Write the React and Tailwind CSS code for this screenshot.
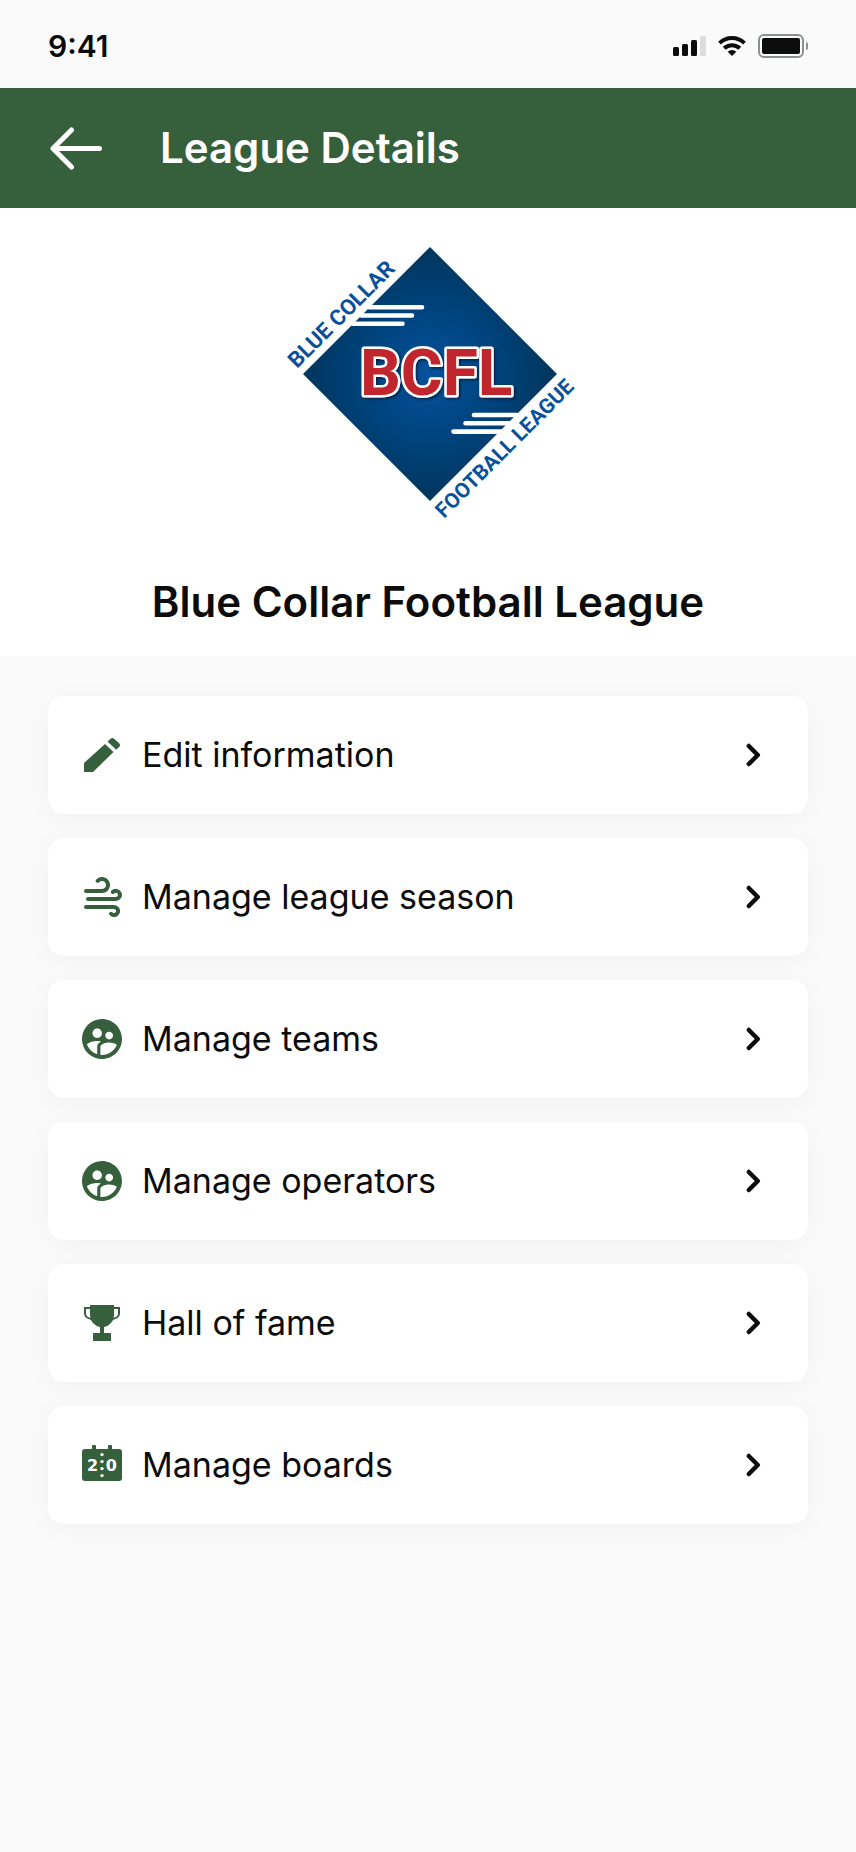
import React from "react"
import { MdSupervisedUserCircle } from "react-icons/md"

function StatusBar() {
  return (
    <div className="flex h-[88px] items-center justify-between px-12 pt-1 text-[#0b0c0b]">
      <span className="text-[30px] font-semibold leading-8">9:41</span>
      <div className="flex items-center gap-3">
        <svg width="33" height="20" viewBox="0 0 33 20" fill="currentColor">
          <rect x="0" y="11" width="6" height="9" rx="1.5" />
          <rect x="9" y="8" width="6" height="12" rx="1.5" />
          <rect x="18" y="4" width="6" height="16" rx="1.5" />
          <rect x="27" y="0" width="6" height="20" rx="1.5" fill="#dcdddd" />
        </svg>
        <svg width="28" height="20" viewBox="0 0 28 20" fill="none" stroke="currentColor" strokeWidth="4">
          <path d="M1.5 7.2a17.8 17.8 0 0 1 25 0" />
          <path d="M6.2 12.3a11.2 11.2 0 0 1 15.6 0" />
          <path d="M14 20l-4.3-4.3a6.2 6.2 0 0 1 8.6 0z" fill="currentColor" stroke="none" />
        </svg>
        <svg width="50" height="24" viewBox="0 0 50 24">
          <rect x="1" y="1" width="44" height="22" rx="5" fill="none" stroke="#8b918d" strokeWidth="2" />
          <rect x="4" y="4" width="38" height="16" rx="2" fill="currentColor" />
          <path d="M48 8a2 2 0 0 1 2 2v4a2 2 0 0 1-2 2z" fill="#8b918d" />
        </svg>
      </div>
    </div>
  )
}

function Header() {
  return (
    <header className="flex h-[120px] items-center gap-14 bg-[#365f3b] px-12 text-white">
      <button type="button" aria-label="Back">
        <svg
          width="56"
          height="44"
          viewBox="0 0 56 44"
          fill="none"
          stroke="currentColor"
          strokeWidth="5"
          strokeLinecap="round"
          strokeLinejoin="round"
        >
          <path d="M23.5 4L5 22.5L23.5 41M5 22.5H51.5" />
        </svg>
      </button>
      <h1 className="text-[42px] font-semibold leading-[48px]">League Details</h1>
    </header>
  )
}

function LeagueLogo() {
  return (
    <svg width="320" height="300" viewBox="-2 0 320 300" role="img" aria-label="BCFL logo">
      <defs>
        <radialGradient id="navy" gradientUnits="userSpaceOnUse" cx="160" cy="144" r="115">
          <stop offset="0" stopColor="#07529d" />
          <stop offset="0.55" stopColor="#00447f" />
          <stop offset="1" stopColor="#003862" />
        </radialGradient>
        <filter id="drop" x="-10%" y="-10%" width="120%" height="130%">
          <feDropShadow dx="1.5" dy="1.5" stdDeviation="1" floodColor="#001a33" floodOpacity="0.8" />
        </filter>
      </defs>
      <path d="M160 17L287 144L160 271L33 144z" fill="url(#navy)" />
      {/* speed lines */}
      <g stroke="#fff" strokeWidth="4.6" strokeLinecap="round">
        <path d="M99 77.2H152M91 85.5H142M83 93.7H132.5" />
        <path d="M204 185H247M195.5 193.3H239M183.5 201.6H231" />
      </g>
      <text
        x="90"
        y="165"
        fontSize="64"
        className="font-[Roboto] font-bold"
        fill="#c1272d"
        stroke="#fff"
        strokeWidth="5"
        strokeLinejoin="round"
        paintOrder="stroke"
        filter="url(#drop)"
      >
        BCFL
      </text>
      <g fill="#0b519a" className="font-[Roboto] font-bold">
        <text transform="translate(27 139) rotate(-45)" fontSize="22">BLUE COLLAR</text>
        <text transform="translate(174 289) rotate(-45)" fontSize="21">FOOTBALL LEAGUE</text>
      </g>
    </svg>
  )
}

function PencilIcon() {
  return (
    <svg width="40" height="40" viewBox="0 0 40 40" fill="currentColor">
      <path d="M2 28V37H11L31.5 17L23 9z" />
      <path d="M25.5 6.6L28.6 3.8Q30.3 2.5 32 3.7L37 8Q38.8 9.8 37.6 11.5L34.2 14.8z" />
    </svg>
  )
}

function WindIcon() {
  return (
    <svg width="40" height="40" viewBox="0 0 40 40" fill="none" stroke="currentColor" strokeWidth="4" strokeLinecap="round">
      <path d="M4 14H20a6 6 0 1 0-4.3-10.2" />
      <path d="M6 22H33.8a4.1 4.1 0 1 0-2.9-7" />
      <path d="M4 30H32a4 4 0 1 1-2.8 6.8" />
    </svg>
  )
}

function PeopleIcon() {
  return <MdSupervisedUserCircle size={40} viewBox="2 2 20 20" />
}

function TrophyIcon() {
  return (
    <svg width="40" height="40" viewBox="0 0 40 40" fill="currentColor">
      <path d="M8 2H32V12.5A12 12 0 0 1 22 23.9V30H29V38H11V30H18V23.9A12 12 0 0 1 8 12.5z" />
      <path d="M8 5H3V11Q3.5 15 9.5 16M32 5H37V11Q36.5 15 30.5 16" fill="none" stroke="currentColor" strokeWidth="2" />
    </svg>
  )
}

function ScoreIcon() {
  return (
    <svg width="40" height="40" viewBox="0 0 40 40" fill="currentColor">
      <rect x="0" y="4" width="40" height="32" rx="3" />
      <rect x="10" y="0" width="4" height="6" rx="1" />
      <rect x="26" y="0" width="4" height="6" rx="1" />
      <g fill="#fff">
        <circle cx="20" cy="9.6" r="1.7" />
        <circle cx="20" cy="16.6" r="1.7" />
        <circle cx="20" cy="23.6" r="1.7" />
        <circle cx="20" cy="30.6" r="1.7" />
      </g>
      <g fill="#fff" fontSize="16" textAnchor="middle" className="font-['DejaVu_Sans'] font-bold">
        <text x="10.5" y="26">2</text>
        <text x="29.3" y="26">0</text>
      </g>
    </svg>
  )
}

const menuItems = [
  { label: "Edit information", Icon: PencilIcon },
  { label: "Manage league season", Icon: WindIcon },
  { label: "Manage teams", Icon: PeopleIcon },
  { label: "Manage operators", Icon: PeopleIcon },
  { label: "Hall of fame", Icon: TrophyIcon },
  { label: "Manage boards", Icon: ScoreIcon },
]

function MenuItem({ label, Icon }) {
  return (
    <button
      type="button"
      className="flex h-[118px] w-full items-center gap-5 rounded-2xl bg-white px-[34px] text-left shadow-[0_4px_24px_rgba(0,0,0,0.04)]"
    >
      <span className="text-[#365f3b]">
        <Icon />
      </span>
      <span className="flex-1 text-[34px] leading-10">{label}</span>
      <svg
        width="40"
        height="40"
        viewBox="0 0 40 40"
        fill="none"
        stroke="currentColor"
        strokeWidth="4.5"
        strokeLinecap="round"
        strokeLinejoin="round"
      >
        <path d="M14.8 11L23.8 20L14.8 29" />
      </svg>
    </button>
  )
}

function App() {
  return (
    <div className="min-h-screen bg-[#fafafa] font-[Inter,sans-serif] text-[#0b0c0b]">
      <StatusBar />
      <Header />
      <section className="flex flex-col items-center bg-white pt-[22px] pb-[30px]">
        <LeagueLogo />
        <h2 className="mt-12 text-[42px] font-semibold leading-[48px]">Blue Collar Football League</h2>
      </section>
      <nav className="flex flex-col gap-6 px-12 py-10">
        {menuItems.map((item) => (
          <MenuItem key={item.label} label={item.label} Icon={item.Icon} />
        ))}
      </nav>
    </div>
  )
}

export default App
